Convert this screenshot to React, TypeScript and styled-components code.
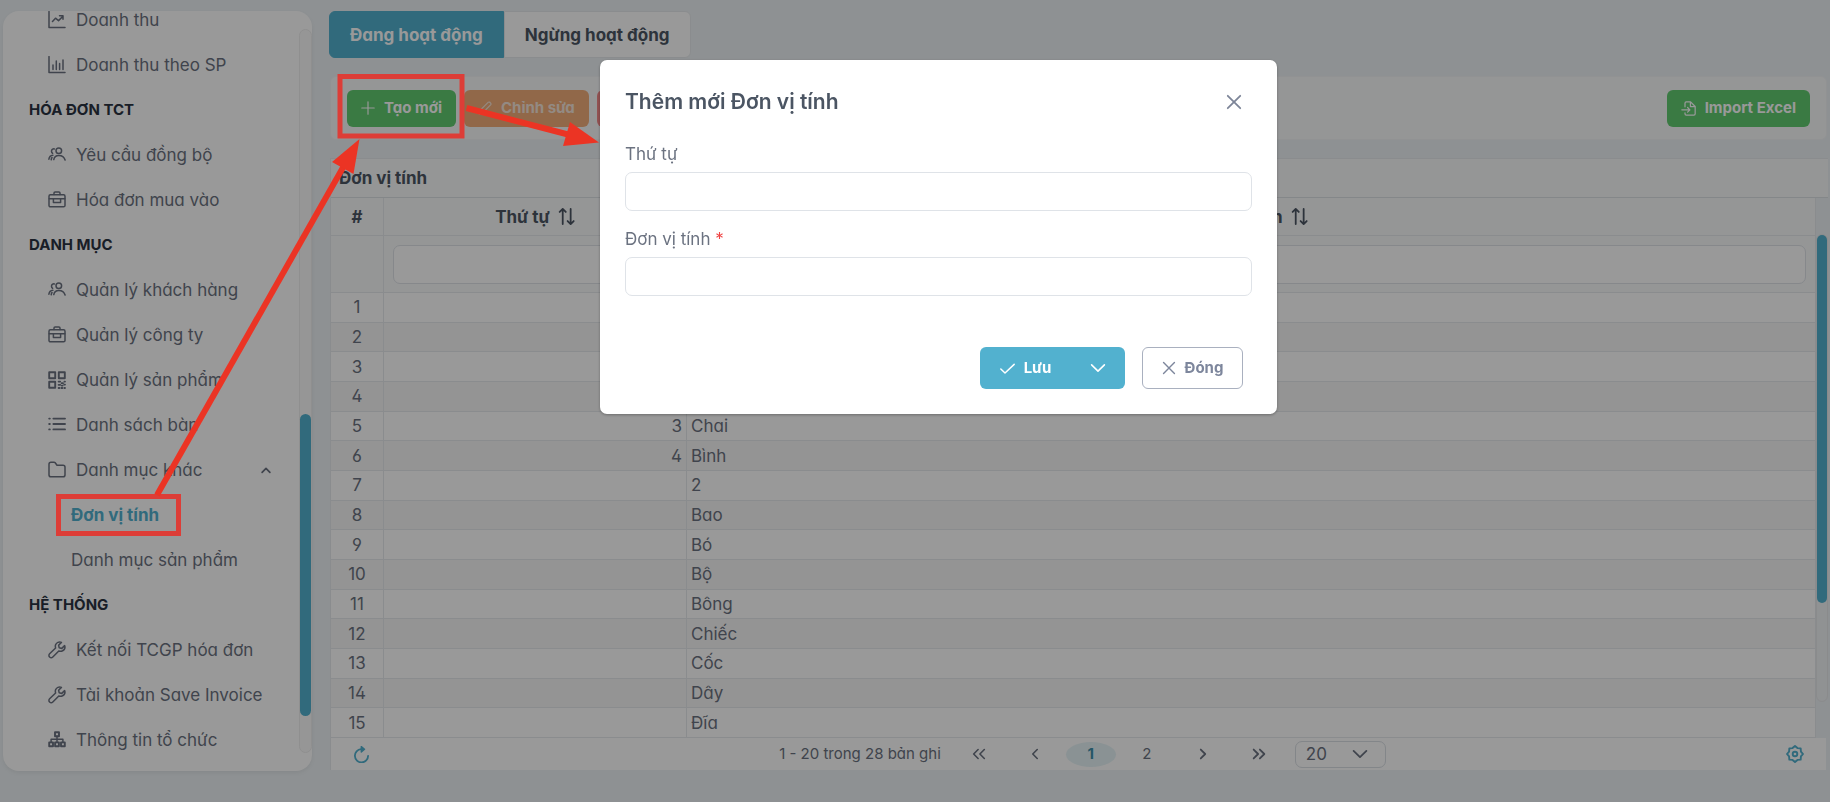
import React from "react";
import styled, { createGlobalStyle, css } from "styled-components";

const GlobalStyle = createGlobalStyle`
  *, *::before, *::after { box-sizing: border-box; }
  html, body, #root { height: 100%; }
  body {
    margin: 0;
    overflow: hidden;
    background: #edf2f5;
    color: #6b7280;
    font-family: Inter, "Noto Sans", "Liberation Sans", sans-serif;
    font-feature-settings: "cv02", "cv03", "cv04", "cv11";
    font-size: 17px;
    line-height: 20px;
  }
  button, input, select { font: inherit; font-feature-settings: inherit; color: inherit; }
  button { cursor: pointer; }
`;

const teal = "#52b1cf";
const line = "#e7eaed";

/* ---------- icons ---------- */

const Svg = styled.svg<{ $size?: number; $weight?: number }>`
  flex: none;
  display: block;
  width: ${(p) => p.$size ?? 18}px;
  height: ${(p) => p.$size ?? 18}px;
  fill: none;
  stroke: currentColor;
  stroke-width: ${(p) => p.$weight ?? 1.5};
  stroke-linecap: round;
  stroke-linejoin: round;
`;

type IconName =
  | "chartLine" | "chartBar" | "users" | "briefcase" | "qrcode" | "list" | "folder"
  | "wrench" | "sitemap" | "chevronUp" | "chevronDown" | "plus" | "pencil" | "trash"
  | "fileImport" | "sort" | "refresh" | "gear" | "close" | "check"
  | "first" | "prev" | "next" | "last";

const shapes: Record<IconName, React.ReactNode> = {
  chartLine: <path d="M1 .6v15.800h16M4.500 10.400l3-3.200 3 2.400 4.500-4.400M11.500 4.800H15v3.400" />,
  chartBar: <path d="M1 .6v15.800h16M5 9v4.500M8.300 5v8.500M11.600 7.500v6M15 4v9.500" />,
  users: (
    <>
      <circle cx="10.800" cy="4.800" r="2.800" />
      <path d="M5.800 13.600c.4-2.900 2.400-4.200 5-4.200 3.200 0 5.400 1.500 6.300 4.600M6.400 2.900C4.700 2.700 3.500 3.700 3.500 5.200c0 .9.400 1.600 1.100 2.100M.9 13.200c.3-2.200 1.700-3.700 4-3.900M3.200 13.800c.1-.9.300-1.600.8-2.300" />
    </>
  ),
  briefcase: (
    <>
      <rect x="1" y="3.800" width="16" height="12" rx="1.400" />
      <path d="M6 3.600V2c0-.7.4-1.100 1.100-1.100h3.800c.7 0 1.100.4 1.100 1.100v1.600M1.200 7.800h15.600M5.400 8v3.400h7.200V8" />
    </>
  ),
  qrcode: (
    <>
      <path d="M1.200 1.200h6v6h-6zM10.800 1.200h6v6h-6zM1.200 10.800h6v6h-6z" strokeWidth="1.900" />
      <path d="M10.600 10.600h1.600M13.600 12.200h1.400M16.400 10.600h.6M10.600 13.800h1.600M13.800 14.600h.8M16.200 13.600h.8M10.600 17h.8M13.400 17h1M16.400 17h.6" strokeWidth="1.800" />
    </>
  ),
  list: <path d="M5.400 2.600H17M5.400 8H17M5.400 13.400H17M1.200 2.600h.6M1.200 8h.6M1.200 13.400h.6" strokeWidth="1.900" />,
  folder: <path d="M1 14V3.200C1 2 1.800 1.200 3 1.200h3c.5 0 .9.200 1.200.6l1.800 2.400h6c1.200 0 2 .8 2 2V14c0 1.200-.8 1.800-2 1.800H3c-1.200 0-2-.6-2-1.800z" />,
  wrench: <path d="M16.600 4.600l-2.800 2.800-2.600-.6-.6-2.600 2.800-2.800c-2.400-1-5 .2-5.800 2.400-.4 1.100-.3 2.200 0 3.200L1.600 12.800c-.9.900-.9 2.300 0 3.200s2.300.9 3.200 0l6-6c1.100.4 2.200.5 3.300 0 2.200-.9 3.300-3.100 2.500-5.400z" />,
  sitemap: (
    <>
      <path d="M7 1.200h4v4H7zM1.200 11.400h3.800v3.800H1.200zM7.100 11.400h3.800v3.800H7.100zM13 11.400h3.800v3.800H13z" strokeWidth="1.900" />
      <path d="M9 5.200v6.200M3.100 11.400V8.200h11.800v3.200" />
    </>
  ),
  chevronUp: <path d="M4 12l5-5 5 5" strokeWidth="2.200" />,
  chevronDown: <path d="M1.800 5.500L9 12.500l7.200-7" />,
  plus: <path d="M9 1v16M1 9h16" />,
  pencil: <path d="M1.500 16.500l.8-4.200L13 1.700c.9-.9 2.500 0 3 .6.700.8 1 1.800.2 2.700L5.700 15.600z" />,
  trash: <path d="M2 4.500h14M6.500 4.500v-2h5v2M3.500 4.500l1 12h9l1-12" />,
  fileImport: <path d="M4.800 7V2.600c0-.9.600-1.500 1.500-1.500h5.200L17 6.600v8.800c0 .9-.6 1.500-1.500 1.500H6.300c-.9 0-1.500-.6-1.500-1.500v-1.200M11.300 1.300v5.400h5.400M1 10.600h9.600M7.900 7.800l2.800 2.800-2.800 2.800" />,
  sort: <path d="M5 17V1.200M1.800 4.200L5 1l3.200 3.200M13.400 1v15.800M10.200 13.800l3.200 3.200 3.200-3.200" strokeWidth="1.900" />,
  refresh: (
    <>
      <path d="M8.600 3.400a7 7 0 1 0 7.400 7" strokeWidth="1.900" />
      <path d="M8.800 .6l3.400 2.800-3.400 3z" fill="currentColor" />
    </>
  ),
  gear: (
    <>
      <path d="M9 1l2.450 2.090 3.210.25.250 3.210L17 9l-2.090 2.450-.25 3.210-3.210.25L9 17l-2.450-2.090-3.210-.25-.25-3.210L1 9l2.090-2.450.25-3.210 3.210-.25z" strokeWidth="1.900" />
      <circle cx="9" cy="9" r="2.300" strokeWidth="1.900" />
    </>
  ),
  close: <path d="M2 2l14 14M16 2L2 16" />,
  check: <path d="M1 9.600l5 4.800L17 4" />,
  first: <path d="M8 4L3 9l5 5M15 4l-5 5 5 5" />,
  prev: <path d="M11.500 4l-5 5 5 5" />,
  next: <path d="M6.500 4l5 5-5 5" />,
  last: <path d="M3 4l5 5-5 5M10 4l5 5-5 5" />,
};

const Icon = ({ name, size, weight }: { name: IconName; size?: number; weight?: number }) => (
  <Svg viewBox="0 0 18 18" $size={size} $weight={weight} aria-hidden="true">
    {shapes[name]}
  </Svg>
);

/* ---------- page frame ---------- */

const Page = styled.div`
  display: flex;
  gap: 17px;
  height: 100vh;
  padding: 11px 2px 31px 3px;
`;

const Sidebar = styled.aside`
  flex: 0 0 309px;
  display: flex;
  padding: 0 0 9px;
  overflow: hidden;
  background: #fff;
  border-radius: 16px;
  box-shadow: 0 2px 4px rgba(0, 0, 0, 0.06);
`;

const Menu = styled.nav`
  flex: 1;
  display: flex;
  flex-direction: column;
  justify-content: flex-end;
`;

const Section = styled.h2`
  flex: none;
  margin: 0;
  padding-left: 26px;
  font-size: 15px;
  font-weight: 700;
  line-height: 45px;
  color: #2b3342;
`;

const MenuLink = styled.a<{ $child?: boolean; $active?: boolean }>`
  flex: none;
  display: flex;
  align-items: center;
  gap: 10px;
  height: 45px;
  padding: 0 26px 0 ${(p) => (p.$child ? 68 : 45)}px;
  color: inherit;
  text-decoration: none;
  white-space: nowrap;
  ${(p) => p.$active && css`
    color: ${teal};
    font-weight: 700;
  `}
`;

const MenuText = styled.span`
  flex: 1;
`;

const SideTrack = styled.div`
  flex: 0 0 13px;
  display: flex;
  flex-direction: column;
  justify-content: flex-end;
  margin: 18px 0 9px;
  padding-bottom: 36px;
  background: #fafafa;
  border: 1px solid #eee;
  border-radius: 7px;
`;

const Thumb = styled.div<{ $share: number }>`
  flex: 0 0 ${(p) => p.$share}%;
  border-radius: 6px;
  background: ${teal};
`;

const Main = styled.main`
  flex: 1;
  min-width: 0;
  display: flex;
  flex-direction: column;
  padding-bottom: 1px;
`;

const Tabs = styled.div`
  display: flex;
  align-self: flex-start;
  height: 47px;
`;

const Tab = styled.button<{ $active?: boolean }>`
  padding: 0 20px;
  border: 1px solid ${(p) => (p.$active ? teal : line)};
  border-radius: ${(p) => (p.$active ? "6px 0 0 6px" : "0 6px 6px 0")};
  background: ${(p) => (p.$active ? teal : "#fff")};
  color: ${(p) => (p.$active ? "#fff" : "#4b5563")};
  font-weight: 700;
`;

const Toolbar = styled.div`
  display: flex;
  align-items: center;
  gap: 8px;
  height: 64px;
  margin: 18px 1px 18px;
  padding: 0 16px;
  background: #f9fafb;
  border: 1px solid #f2f4f6;
  border-radius: 6px;
`;

const Spacer = styled.span`
  flex: 1;
`;

const Action = styled.button<{ $color: string }>`
  display: flex;
  align-items: center;
  justify-content: center;
  gap: 9px;
  height: 37px;
  padding: 0 14px;
  border: 0;
  border-radius: 6px;
  background: ${(p) => p.$color};
  color: #fff;
  font-size: 15px;
  font-weight: 700;
  white-space: nowrap;
  &:disabled { color: #f6e6da; }
`;

/* ---------- data grid ---------- */

const Grid = styled.section`
  flex: 1;
  min-height: 0;
  display: flex;
  flex-direction: column;
  margin-left: 1px;
  border: 1px solid ${line};
  border-width: 1px 0 0 1px;
`;

const GridTitle = styled.h1`
  flex: none;
  margin: 0;
  padding-left: 8px;
  background: #f9fafb;
  border-bottom: 1px solid #dde1e5;
  color: #4b5563;
  font-size: 17px;
  font-weight: 700;
  line-height: 38px;
`;

const GridBody = styled.div`
  flex: 1;
  min-height: 0;
  display: flex;
`;

const Table = styled.table`
  flex: 1;
  height: 100%;
  table-layout: fixed;
  border-collapse: separate;
  border-spacing: 0;
  background: #fff;
`;

const HeadCell = styled.th`
  height: 38px;
  padding: 0;
  background: #f9fafb;
  border-right: 1px solid ${line};
  border-bottom: 1px solid ${line};
  color: #4b5563;
  font-weight: 700;
`;

const HeadLabel = styled.span`
  display: flex;
  align-items: center;
  justify-content: center;
  gap: 8px;
`;

const FilterCell = styled.td`
  height: 57px;
  padding: 0 9px;
  background: #f9fafb;
  border-right: 1px solid ${line};
  border-bottom: 1px solid ${line};
`;

const TextInput = styled.input`
  display: block;
  width: 100%;
  height: 39px;
  padding: 0 12px;
  border: 1px solid #dfe3e8;
  border-radius: 7px;
  background: #fff;
  outline: 0;
`;

const Row = styled.tr`
  &:nth-child(even) { background: #f7f7f7; }
`;

const Cell = styled.td<{ $align?: "left" | "center" | "right" }>`
  padding: 0 4px;
  border-right: 1px solid ${line};
  border-bottom: 1px solid ${line};
  text-align: ${(p) => p.$align ?? "left"};
  line-height: 20px;
`;

const GridTrack = styled.div`
  flex: 0 0 12px;
  margin: 36px 0;
  background: #f1f3f5;
  border: 1px solid #e6e8ea;
  border-radius: 6px;
  display: flex;
  flex-direction: column;
`;

const Footer = styled.footer`
  flex: none;
  display: grid;
  grid-template-columns: 1fr auto 1fr;
  align-items: center;
  height: 32px;
  margin-right: 2px;
  padding: 0 22px;
  background: #fff;
`;

const Pager = styled.div`
  display: flex;
  align-items: center;
  padding-left: 8px;
  font-size: 15px;
`;

const PagerText = styled.span`
  margin-right: 10px;
`;

const PageButton = styled.button<{ $active?: boolean }>`
  display: flex;
  align-items: center;
  justify-content: center;
  width: 50px;
  height: 25px;
  margin: 0 3px;
  padding: 0;
  border: 0;
  border-radius: 50%;
  background: ${(p) => (p.$active ? "#e6f4f7" : "none")};
  color: ${(p) => (p.$active ? "#3f8fab" : "inherit")};
  font-weight: ${(p) => (p.$active ? 700 : 400)};
`;

const IconButton = styled.button<{ $end?: boolean }>`
  display: flex;
  justify-self: ${(p) => (p.$end ? "end" : "start")};
  padding: 0;
  border: 0;
  background: none;
  color: ${teal};
`;

const SizePicker = styled.span`
  display: grid;
  align-items: center;
  width: 91px;
  margin-left: 8px;
  > * { grid-area: 1 / 1; }
  > svg { justify-self: end; margin-right: 18px; pointer-events: none; }
`;

const SizeSelect = styled.select`
  appearance: none;
  height: 27px;
  padding: 0 10px;
  border: 1px solid #dadfe4;
  border-radius: 7px;
  background: #fff;
  font-size: 17px;
`;

/* ---------- dialog ---------- */

const Backdrop = styled.div`
  position: fixed;
  inset: 0;
  display: flex;
  align-items: flex-start;
  justify-content: center;
  padding: 60px 0 0 47px;
  background: rgba(0, 0, 0, 0.4);
`;

const Dialog = styled.div`
  width: 677px;
  padding: 25px;
  border-radius: 7px;
  background: #fff;
  box-shadow: 0 1px 3px rgba(0, 0, 0, 0.3);
`;

const DialogHead = styled.header`
  display: flex;
  align-items: center;
  justify-content: space-between;
  height: 34px;
  margin-bottom: 25px;
  padding-right: 10px;
`;

const DialogTitle = styled.h2`
  margin: 0;
  color: #4b5563;
  font-size: 21px;
  font-weight: 600;
`;

const CloseButton = styled.button`
  display: flex;
  padding: 0;
  border: 0;
  background: none;
  color: #7d8598;
`;

const Field = styled.label`
  display: grid;
  gap: 8px;
  margin-bottom: 18px;
  line-height: 20px;
`;

const Required = styled.span`
  color: #ef4444;
`;

const DialogActions = styled.footer`
  display: flex;
  justify-content: flex-end;
  gap: 17px;
  padding: 33px 9px 0 0;
`;

const SplitButton = styled.div`
  display: flex;
  height: 42px;
  overflow: hidden;
  border-radius: 6px;
`;

const DialogButton = styled.button<{ $outlined?: boolean; $width: number }>`
  display: flex;
  align-items: center;
  justify-content: center;
  gap: 9px;
  width: ${(p) => p.$width}px;
  height: 42px;
  padding: 0;
  border: ${(p) => (p.$outlined ? "1px solid #a9b0bf" : "0")};
  border-radius: ${(p) => (p.$outlined ? 6 : 0)}px;
  background: ${(p) => (p.$outlined ? "#fff" : teal)};
  color: ${(p) => (p.$outlined ? "#7d869c" : "#fff")};
  font-size: 15px;
  font-weight: 700;
`;

/* ---------- guide marks drawn over the screen ---------- */

const Guide = styled.svg`
  position: fixed;
  inset: 0;
  width: 100%;
  height: 100%;
  pointer-events: none;
`;

/* ---------- data ---------- */

type Entry = { label: string; icon?: IconName; section?: boolean; child?: boolean; active?: boolean; open?: boolean };

const menu: Entry[] = [
  { label: "Doanh thu", icon: "chartLine" },
  { label: "Doanh thu theo SP", icon: "chartBar" },
  { label: "HÓA ĐƠN TCT", section: true },
  { label: "Yêu cầu đồng bộ", icon: "users" },
  { label: "Hóa đơn mua vào", icon: "briefcase" },
  { label: "DANH MỤC", section: true },
  { label: "Quản lý khách hàng", icon: "users" },
  { label: "Quản lý công ty", icon: "briefcase" },
  { label: "Quản lý sản phẩm", icon: "qrcode" },
  { label: "Danh sách bàn", icon: "list" },
  { label: "Danh mục khác", icon: "folder", open: true },
  { label: "Đơn vị tính", child: true, active: true },
  { label: "Danh mục sản phẩm", child: true },
  { label: "HỆ THỐNG", section: true },
  { label: "Kết nối TCGP hóa đơn", icon: "wrench" },
  { label: "Tài khoản Save Invoice", icon: "wrench" },
  { label: "Thông tin tổ chức", icon: "sitemap" },
];

const rows: [string, string][] = [
  ["", ""], ["", ""], ["", ""], ["", ""],
  ["3", "Chai"], ["4", "Bình"], ["", "2"], ["", "Bao"], ["", "Bó"], ["", "Bộ"],
  ["", "Bông"], ["", "Chiếc"], ["", "Cốc"], ["", "Dây"], ["", "Đĩa"],
];

export default function App() {
  return (
    <>
      <GlobalStyle />
      <Page>
        <Sidebar>
          <Menu>
            {menu.map((m) =>
              m.section ? (
                <Section key={m.label}>{m.label}</Section>
              ) : (
                <MenuLink key={m.label} href="#" $child={m.child} $active={m.active}>
                  {m.icon && <Icon name={m.icon} />}
                  <MenuText>{m.label}</MenuText>
                  {m.open && <Icon name="chevronUp" size={14} />}
                </MenuLink>
              )
            )}
          </Menu>
          <SideTrack>
            <Thumb $share={44} />
          </SideTrack>
        </Sidebar>

        <Main>
          <Tabs role="tablist">
            <Tab role="tab" aria-selected="true" $active>Đang hoạt động</Tab>
            <Tab role="tab" aria-selected="false">Ngừng hoạt động</Tab>
          </Tabs>

          <Toolbar>
            <Action $color="#61cb70"><Icon name="plus" size={14} />Tạo mới</Action>
            <Action $color="#f2ae7a" disabled><Icon name="pencil" size={14} />Chỉnh sửa</Action>
            <Action $color="#f58a8a" disabled aria-label="Xóa"><Icon name="trash" size={14} /></Action>
            <Spacer />
            <Action $color="#61cb70"><Icon name="fileImport" size={15} />Import Excel</Action>
          </Toolbar>

          <Grid>
            <GridTitle>Đơn vị tính</GridTitle>
            <GridBody>
              <Table>
                <colgroup>
                  <col style={{ width: 53 }} />
                  <col style={{ width: 303 }} />
                  <col />
                </colgroup>
                <thead>
                  <tr>
                    <HeadCell>#</HeadCell>
                    <HeadCell><HeadLabel>Thứ tự<Icon name="sort" size={17} /></HeadLabel></HeadCell>
                    <HeadCell><HeadLabel>Đơn vị tính<Icon name="sort" size={17} /></HeadLabel></HeadCell>
                  </tr>
                  <tr>
                    <FilterCell />
                    <FilterCell><TextInput aria-label="Lọc thứ tự" /></FilterCell>
                    <FilterCell><TextInput aria-label="Lọc đơn vị tính" /></FilterCell>
                  </tr>
                </thead>
                <tbody>
                  {rows.map(([order, unit], i) => (
                    <Row key={i}>
                      <Cell $align="center">{i + 1}</Cell>
                      <Cell $align="right">{order}</Cell>
                      <Cell>{unit}</Cell>
                    </Row>
                  ))}
                </tbody>
              </Table>
              <GridTrack>
                <Thumb $share={79} />
              </GridTrack>
            </GridBody>
            <Footer>
              <IconButton aria-label="Tải lại"><Icon name="refresh" size={17} /></IconButton>
              <Pager>
                <PagerText>1 - 20 trong 28 bản ghi</PagerText>
                <PageButton aria-label="Trang đầu"><Icon name="first" size={16} weight={1.8} /></PageButton>
                <PageButton aria-label="Trang trước"><Icon name="prev" size={16} weight={1.8} /></PageButton>
                <PageButton $active>1</PageButton>
                <PageButton>2</PageButton>
                <PageButton aria-label="Trang sau"><Icon name="next" size={16} weight={2} /></PageButton>
                <PageButton aria-label="Trang cuối"><Icon name="last" size={16} weight={2} /></PageButton>
                <SizePicker>
                  <SizeSelect aria-label="Số bản ghi mỗi trang" defaultValue="20">
                    <option>20</option>
                    <option>50</option>
                  </SizeSelect>
                  <Icon name="chevronDown" size={16} weight={2} />
                </SizePicker>
              </Pager>
              <IconButton $end aria-label="Cài đặt"><Icon name="gear" size={18} /></IconButton>
            </Footer>
          </Grid>
        </Main>
      </Page>

      <Backdrop>
        <Dialog role="dialog" aria-modal="true" aria-labelledby="dialog-title">
          <DialogHead>
            <DialogTitle id="dialog-title">Thêm mới Đơn vị tính</DialogTitle>
            <CloseButton aria-label="Đóng hộp thoại"><Icon name="close" size={16} weight={2} /></CloseButton>
          </DialogHead>
          <Field>
            <span>Thứ tự</span>
            <TextInput />
          </Field>
          <Field>
            <span>Đơn vị tính <Required>*</Required></span>
            <TextInput required />
          </Field>
          <DialogActions>
            <SplitButton>
              <DialogButton $width={91}><Icon name="check" size={15} weight={1.8} />Lưu</DialogButton>
              <DialogButton $width={54} aria-label="Tùy chọn lưu"><Icon name="chevronDown" size={16} weight={1.8} /></DialogButton>
            </SplitButton>
            <DialogButton $outlined $width={101}><Icon name="close" size={14} weight={1.8} />Đóng</DialogButton>
          </DialogActions>
        </Dialog>
      </Backdrop>

      <Guide aria-hidden="true">
        <g fill="none" stroke="#dd3d37" strokeWidth="5">
          <rect x="340" y="76.5" width="122" height="59.5" />
          <rect x="58.5" y="496.5" width="120" height="37" />
        </g>
        <g stroke="#eb3424" strokeWidth="6">
          <path d="M157 495L345 164" />
          <path d="M466.5 108L570 135" />
        </g>
        <g fill="#eb3424">
          <path d="M359.5 139L332 162L353.5 174z" />
          <path d="M599 142.5L570 122L563 146z" />
        </g>
      </Guide>
    </>
  );
}
